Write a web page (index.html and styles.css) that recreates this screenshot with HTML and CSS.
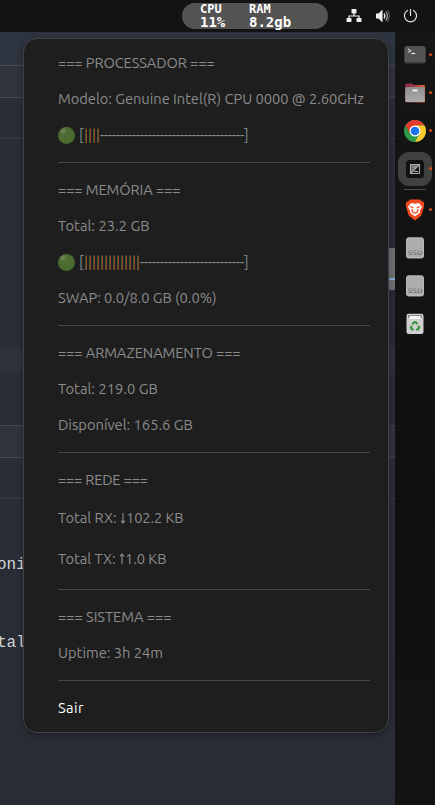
FILE: index.html
```html
<!DOCTYPE html>
<html lang="pt-BR">
<head>
<meta charset="utf-8">
<title>Monitor do sistema</title>
<link rel="stylesheet" href="styles.css">
</head>
<body>
<div class="screen">
  <header class="topbar">
    <div class="pill">
      <div class="stat"><span class="stat-name">CPU</span><span class="stat-value">11%</span></div>
      <div class="stat"><span class="stat-name">RAM</span><span class="stat-value">8.2gb</span></div>
    </div>
    <div class="tray">
      <svg width="16" height="16" viewBox="0 0 16 16" fill="#f2f2f2"><rect x="5.5" y="1" width="5" height="4.5" rx=".8"/><rect x=".5" y="10" width="5" height="4" rx=".8"/><rect x="10.5" y="10" width="5" height="4" rx=".8"/><path d="M8 5v3M3 10.5V8h10v2.500" fill="none" stroke="#f2f2f2" stroke-width="1.2"/></svg>
      <svg width="16" height="16" viewBox="0 0 16 16"><path d="M2 5.500h2.500L8.500 1.500v13L4.500 10.500H2z" fill="#f2f2f2"/><path d="M10 5.500q1.800 2.500 0 5" fill="none" stroke="#e8e8e8" stroke-width="1.300"/><path d="M11.800 3.500q3.200 4.500 0 9" fill="none" stroke="#aaa" stroke-width="1.200"/><path d="M13.500 2q3.800 6 0 12" fill="none" stroke="#666" stroke-width="1"/></svg>
      <svg width="16" height="16" viewBox="0 0 16 16" fill="none" stroke="#e4e4e4" stroke-width="1.200" stroke-linecap="round"><path d="M5.500 2.500a6.100 6.100 0 1 0 6 0M8.500 1.500v6"/></svg>
    </div>
  </header>
  <main class="workspace">
    <div class="editor">
      <div class="band b1"></div><div class="band b2"></div><div class="band b3"></div><div class="band b4"></div>
      <div class="band b5"></div><div class="band b6"></div><div class="band b2 b7"></div><div class="band b3 b8"></div>
      <div class="band b9"><span class="code">oni</span><span class="code code-second">tal</span></div>
      <div class="scroll"></div>
    </div>
    <nav class="dock">
      <div class="app running"><svg width="22" height="22" viewBox="0 0 22 22"><rect x=".8" y="2.500" width="20.400" height="16.500" rx="1.800" fill="#535353" stroke="#686868" stroke-width=".6"/><path d="M1.500 18.500h19" stroke="#393939"/><path d="M3.800 5l3 1.800-3 1.800" fill="none" stroke="#ccc" stroke-width="1.100"/><path d="M7.300 9.500h4" stroke="#eee" stroke-width="1.200"/></svg></div>
      <div class="app running"><svg width="22" height="22" viewBox="0 0 22 22"><defs><linearGradient id="folder"><stop stop-color="#7d2850"/><stop offset="1" stop-color="#e05a38"/></linearGradient><linearGradient id="front" x2="0" y2="1"><stop stop-color="#8e8e8e"/><stop offset="1" stop-color="#acacac"/></linearGradient></defs><path d="M1 3q0-1.500 1.500-1.500h5.500l1.500 1.500h10.500q1 0 1 1V19.500q0 1-1 1H2q-1 0-1-1z" fill="url(#folder)"/><rect x="1.300" y="5" width="19.400" height="15" rx="1.200" fill="url(#front)"/><rect x="8.500" y="7.500" width="5" height="2" fill="#f2f2f2"/></svg></div>
      <div class="app running"><svg width="22" height="22" viewBox="0 0 22 22"><circle cx="11" cy="11" r="11" fill="#2b9b4b"/><path d="M1.500 5.500A11 11 0 0 1 20.500 5.500H11L6.240 13.750z" fill="#e33b2e"/><path d="M20.500 5.500A11 11 0 0 1 11 22L15.760 13.750 11 5.500z" fill="#fbc92d"/><circle cx="11" cy="11" r="5.500" fill="#fff"/><circle cx="11" cy="11" r="4.300" fill="#1a73e8"/></svg></div>
      <div class="app running"><div class="active"><svg width="18" height="18" viewBox="0 0 18 18"><rect width="18" height="18" rx="3.500" fill="#111"/><path d="M4.500 4.500h9L4.500 13.500z" fill="#6b6b6b"/><path d="M4.500 4.500h9v9h-9zM4.500 13.500l9-9M6.500 7h4M8 11.500h4" fill="none" stroke="#aaa" stroke-width="1.100"/></svg></div></div>
      <div class="app running brave"><svg width="20" height="22" viewBox="0 0 20 22"><path d="M5 .5h10l2 2 1.500 0L19.300 6l-1 4-2 6.500L10 21.500 3.700 16.500l-2-6.500-1-4L1.500 2.500H3z" fill="#f04a20"/><path d="M6 4l4 .7L14 4l3 4-2 3.500 0 2L10 17.500 5 13.500v-2L3 8z" fill="#fff"/><path d="M5 7.500l3.500 1.500M15 7.500l-3.500 1.500M7 10l.5 3 2.500 1 2.500-1 .5-3" fill="none" stroke="#f04a20" stroke-width="1.300"/></svg></div>
      <div class="app"><svg width="18" height="22" viewBox="0 0 18 22"><rect x=".5" y=".8" width="17" height="20.200" rx="2" fill="#adadad" stroke="#cecece" stroke-width=".8"/><text x="9.200" y="18.300" text-anchor="middle" class="ssd" textLength="15" lengthAdjust="spacingAndGlyphs">SSD</text></svg></div>
      <div class="app"><svg width="18" height="22" viewBox="0 0 18 22"><rect x=".5" y=".8" width="17" height="20.200" rx="2" fill="#adadad" stroke="#cecece" stroke-width=".8"/><text x="9.200" y="18.300" text-anchor="middle" class="ssd" textLength="15" lengthAdjust="spacingAndGlyphs">SSD</text></svg></div>
      <div class="app"><svg width="18" height="22" viewBox="0 0 18 22"><rect x=".5" y=".8" width="17" height="20.200" rx="2" fill="#d0d0d0"/><path d="M2 2h14v3H2z" fill="#8b8b8b"/><path d="M3.500 3h11v3h-11z" fill="#f4f4f4"/><g fill="none" stroke="#35943a" stroke-width="2"><path d="M6.500 11.500L8 9.300h2l1.300 2M12.300 12.800l1 2-1.200 1.800H10M7.800 16.600H6l-1.200-1.800 1-2"/></g></svg></div>
    </nav>
    <section class="menu">
      <div class="row"><span data-width="156.5">=== PROCESSADOR ===</span></div>
      <div class="row"><span data-width="306">Modelo: Genuine Intel(R) CPU 0000 @ 2.60GHz</span></div>
      <div class="row meter"><i class="dot"></i><span class="bracket">[</span><span class="used" data-width="16">||||</span><span class="free" data-width="144">------------------------------------</span><span class="bracket">]</span></div>
      <hr>
      <div class="row"><span data-width="122.5">=== MEMÓRIA ===</span></div>
      <div class="row"><span data-width="91.5">Total: 23.2 GB</span></div>
      <div class="row meter"><i class="dot"></i><span class="bracket">[</span><span class="used" data-width="56">||||||||||||||</span><span class="free" data-width="104">--------------------------</span><span class="bracket">]</span></div>
      <div class="row"><span data-width="158.5">SWAP: 0.0/8.0 GB (0.0%)</span></div>
      <hr>
      <div class="row"><span data-width="182.5">=== ARMAZENAMENTO ===</span></div>
      <div class="row"><span data-width="99.8">Total: 219.0 GB</span></div>
      <div class="row"><span data-width="134.8">Disponível: 165.6 GB</span></div>
      <hr>
      <div class="row"><span data-width="89.5">=== REDE ===</span></div>
      <div class="row tall"><span data-width="62">Total RX: </span><svg class="arrow" width="6" height="14" viewBox="0 0 6 14"><path d="M3 2v10M1 9.500l2 2.500 2-2.500"/></svg><span data-width="57.500">102.2 KB</span></div>
      <div class="row tall"><span data-width="61">Total TX: </span><svg class="arrow" width="6" height="14" viewBox="0 0 6 14"><path d="M3 12V2M1 4.500L3 2l2 2.500"/></svg><span data-width="41.500">1.0 KB</span></div>
      <hr>
      <div class="row"><span data-width="113.5">=== SISTEMA ===</span></div>
      <div class="row"><span data-width="105">Uptime: 3h 24m</span></div>
      <hr>
      <div class="row action"><span data-width="26">Sair</span></div>
    </section>
  </main>
</div>
<script src="script.js"></script>
</body>
</html>
```
FILE: styles.css
```css
* { box-sizing: border-box; }
body { margin: 0; background: #131313; }
.screen { width: 435px; height: 805px; overflow: hidden; display: flex; flex-direction: column; }
.topbar { height: 32px; flex: none; display: flex; align-items: flex-start; padding: 3px 16px 0 182px; background: #131313; }
.pill { width: 146px; height: 26px; border-radius: 13px; background: #535353; display: flex; padding-left: 18px; color: #fff; font-family: "DejaVu Sans Mono", monospace; font-weight: bold; }
.stat { width: 49px; display: flex; flex-direction: column; }
.stat-name { font-size: 12px; line-height: 13px; }
.stat-value { font-size: 14px; line-height: 13px; }
.tray { display: flex; gap: 12px; margin-left: 18px; padding-top: 5px; }
.workspace { position: relative; flex: 1; display: flex; }
.editor { position: relative; width: 395px; display: flex; flex-direction: column; background: #282c34; }
.band { flex: none; }
.b1 { height: 33px; background: #2d343f; }
.b2 { height: 33px; background: #2f333e; border-top: 1px solid #454952; border-bottom: 1px solid #454952; }
.b3 { height: 41px; background: #292d36; border-bottom: 1px solid #393d46; }
.b4 { height: 208px; background: #282c34; }
.b5 { height: 26px; background: #2d3139; }
.b6 { height: 52px; background: #282c34; }
.b9 { height: 306px; padding-top: 54px; }
.code { display: block; height: 24px; margin-left: -3px; color: #d4d7dc; font: 16px/24px "Liberation Mono", monospace; }
.code-second { margin-top: 54px; margin-left: -3px; }
.scroll { position: absolute; left: 388px; top: 216px; width: 7px; height: 42px; background: linear-gradient(#6a6d72 30px, #83a8d2 30px, #83a8d2 32px, #6a6d72 32px); }
.dock { width: 40px; padding-top: 4px; background: linear-gradient(#151515, #101010 60%, #131313); display: flex; flex-direction: column; }
.app { position: relative; height: 38px; flex: none; display: flex; align-items: center; justify-content: center; }
.running::after { content: ""; position: absolute; right: 3px; top: 17px; width: 3px; height: 3px; border-radius: 50%; background: #dc4a18; }
.active { width: 34px; height: 34px; border-radius: 11px; background: #404040; display: flex; align-items: center; justify-content: center; }
.brave { height: 38px; margin-top: 3px; }
.brave::before { content: ""; position: absolute; left: 9px; top: -2px; width: 22px; height: 1px; background: #4a4a4a; }
.ssd { font: 6px "DejaVu Sans", sans-serif; fill: #666; }
.menu { position: absolute; left: 23px; top: 6px; width: 366px; height: 695px; padding: 6px 18px 6px 34px; border: 1px solid #424244; border-radius: 14px; background: #1e1e1e; box-shadow: 0 2px 5px rgba(0, 0, 0, .3); color: #8b8b8b; font-family: Ubuntu, "Noto Sans", sans-serif; font-size: 14.667px; }
.row { height: 36px; display: flex; align-items: center; white-space: pre; line-height: 20px; }
.tall { height: 41px; padding-bottom: 2px; }
.action { color: #fff; }
hr { height: 1px; margin: 9px 0; border: 0; background: #474747; }
.dot { width: 17px; height: 17px; margin-right: 4px; border-radius: 50%; background: radial-gradient(circle at 30% 22%, #68834f 0 1px, #4d6c31 4px, #496a2d); }
.bracket { width: 5px; color: #7b8b8f; }
.used { color: #a5713c; }
.free { color: #849195; }
.arrow { fill: none; stroke: #8b8b8b; stroke-width: 1.1; }
```
FILE: script.js
```js
document.querySelectorAll("[data-width]").forEach((label) => {
  const natural = label.getBoundingClientRect().width;
  const target = Number(label.dataset.width);
  label.style.letterSpacing = (target - natural) / label.textContent.length + "px";
});
```
